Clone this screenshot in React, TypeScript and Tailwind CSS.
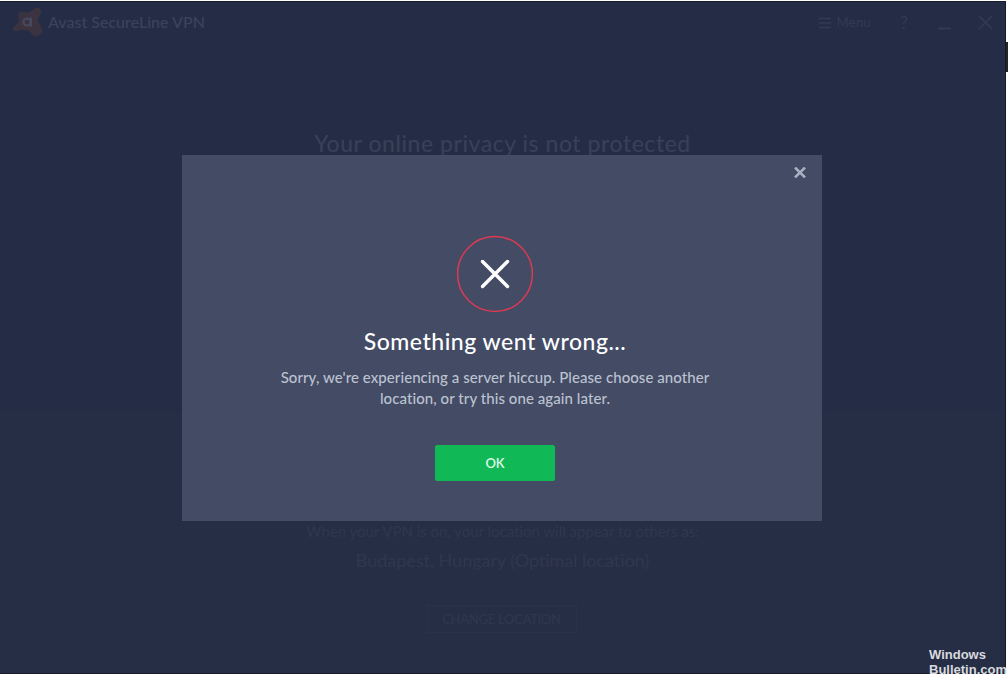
import type { ReactNode } from "react";

interface IIconButton {
  label: string;
  className?: string;
  children: ReactNode;
}

const IconButton = ({ label, className = "", children }: IIconButton) => (
  <button type="button" aria-label={label} className={className}>
    {children}
  </button>
);

const Logo = () => (
  <svg width="32" height="32" viewBox="0 0 32 32" className="shrink-0">
    <path
      d="M6 9C6 5 9 5 12 6C15 7 18 7 21 4C24 0 30 2 29 7C28 10 26 12 26 15C27 19 31 22 30 26C28 31 23 31 20 28C17 24 14 24 10 24C5 25 1 26 1 23C1 20 7 18 7 14C7 12 6 10 6 9Z"
      fill="#3b3440"
    />
    <circle cx="15" cy="16" r="3.500" fill="none" stroke="#464a60" strokeWidth="2" />
    <path d="M19 11.500V20.500" stroke="#464a60" strokeWidth="2" />
  </svg>
);

const TitleBar = () => (
  <header className="flex h-10 shrink-0 items-center justify-between bg-[#252d46] pr-3 pl-3">
    <div className="flex items-center gap-1 text-[#3b435b]">
      <Logo />
      <h1 className="-mt-px text-[16px] leading-5 font-medium tracking-[0.02px] whitespace-nowrap">
        Avast SecureLine VPN
      </h1>
    </div>
    <div className="flex items-center text-[#333b53]">
      <button type="button" className="mt-0.5 flex items-center gap-[6px] text-[13px] tracking-[0.3px]">
        <svg width="12" height="12" viewBox="0 0 12 12" stroke="currentColor" strokeWidth="1.500">
          <path d="M0 1.500H12M0 6H12M0 10.500H12" />
        </svg>
        Menu
      </button>
      <IconButton label="Help" className="mt-0.5 ml-7 w-2.5 text-[17px] leading-5">
        ?
      </IconButton>
      <IconButton label="Minimize" className="mt-0.5 ml-[29px]">
        <svg width="13" height="14" viewBox="0 0 13 14" stroke="currentColor" strokeWidth="2">
          <path d="M0 12.500H13" />
        </svg>
      </IconButton>
      <IconButton label="Close" className="ml-[27px]">
        <svg width="15" height="15" viewBox="0 0 15 15" stroke="currentColor" strokeWidth="1.500">
          <path d="M1 1L14 14M14 1L1 14" />
        </svg>
      </IconButton>
    </div>
  </header>
);

const LocationPanel = () => (
  <section className="flex grow flex-col items-center bg-[#262e46] pt-[109px] text-[#2f374f]">
    <p className="text-[15px] leading-5 tracking-[-0.02px]">
      When your VPN is on, your location will appear to others as:
    </p>
    <p className="mt-[7px] text-[18px] leading-6 tracking-[-0.03px]">
      Budapest, Hungary (Optimal location)
    </p>
    <button
      type="button"
      className="mt-[33px] mr-0.5 h-7 w-[150px] border border-[#2a324a] text-[13px] leading-5 tracking-[-0.02em]"
    >
      CHANGE LOCATION
    </button>
  </section>
);

const ErrorDialog = () => (
  <div
    role="dialog"
    className="absolute top-[153px] left-[182px] flex h-[366px] w-[640px] flex-col bg-[#434b65]"
  >
    <div className="flex justify-end pt-3 pr-4">
      <IconButton label="Dismiss">
        <svg width="12" height="11" viewBox="0 0 12 11" stroke="#a9b0c1" strokeWidth="2.500">
          <path d="M1 0.500L11 10.500M11 0.500L1 10.500" />
        </svg>
      </IconButton>
    </div>
    <div className="flex flex-col items-center pt-[57px] pr-[14px]">
      <svg width="78" height="78" viewBox="0 0 78 78" fill="none">
        <circle cx="39" cy="39" r="37.400" stroke="#dc3a52" strokeWidth="1.500" />
        <path
          d="M26.500 26.500L51.500 51.500M51.500 26.500L26.500 51.500"
          stroke="#fff"
          strokeWidth="3.500"
          strokeLinecap="round"
        />
      </svg>
      <h2 className="mt-3 text-[23px] leading-8 font-medium tracking-[0.52px] whitespace-nowrap text-white">
        Something went wrong...
      </h2>
      <p className="mt-2.5 text-center text-[15px] leading-[21px] font-medium tracking-[0.07px] whitespace-nowrap text-[#bcc2d0]">
        Sorry, we're experiencing a server hiccup. Please choose another
        <br />
        location, or try this one again later.
      </p>
      <button
        type="button"
        className="mt-9 h-9 w-[120px] rounded-[2px] bg-[#10b956] pt-0.5 text-[13px] font-semibold text-[#e0faea]"
      >
        OK
      </button>
    </div>
  </div>
);

const App = () => (
  <div className="relative flex h-[676px] w-[1008px] overflow-hidden bg-white pt-px pb-[2px] font-['Lato','Liberation_Sans',sans-serif]">
    <div className="relative flex w-[1006px] flex-col border-t border-r border-b border-[#171b25] bg-[#252d46]">
      <TitleBar />
      <section className="flex h-[370px] shrink-0 flex-col items-center pt-[85px]">
        <h2 className="text-[23px] leading-8 tracking-[0.56px] text-[#39415a]">
          Your online privacy is not protected
        </h2>
      </section>
      <LocationPanel />
      <ErrorDialog />
    </div>
    <div className="mt-[41px] h-[30px] w-[2px] bg-[#23252b]" />
    <p className="absolute top-[647px] left-[929px] font-['Liberation_Sans',sans-serif] text-[13px] leading-[15px] font-bold text-[#d8dade]">
      Windows
      <br />
      Bulletin.com
    </p>
  </div>
);

export default App;
